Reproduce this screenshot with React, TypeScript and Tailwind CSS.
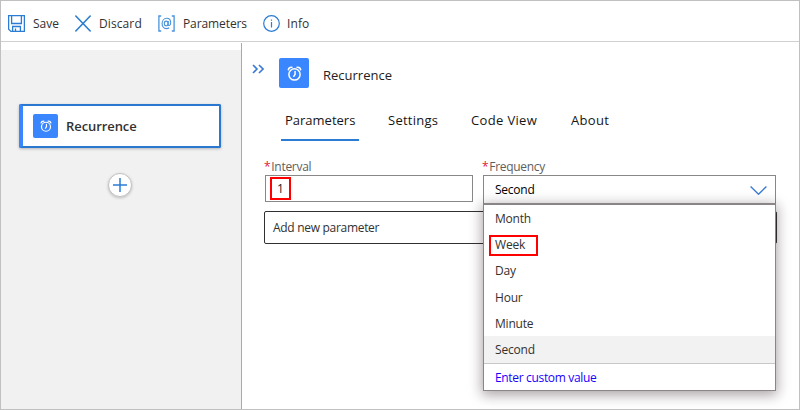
import React from "react";

function AlarmIcon({ size }: { size: number }) {
  return (
    <svg width={size} height={size} viewBox="0 0 16 16" fill="none" stroke="#fff" strokeWidth="1.6" strokeLinecap="round">
      <circle cx="8" cy="9" r="6" />
      <path d="M8.6 5.9V9L7.2 11M1.4 4C1.8 2.3 3 1.2 5.2 1.4M14.6 4C14.2 2.3 13 1.2 10.8 1.4" />
    </svg>
  );
}

function SaveIcon() {
  return (
    <svg width="17" height="17" viewBox="0 0 17 17" fill="none" stroke="#2b7cd3" strokeWidth="1.3">
      <path d="M.6 .6H16.4V16.4H3L.6 14.2ZM3.6 .6V8.5H13.4V.6M4.6 16.4V11.5H12.4V16.4M7.5 16V13.5" />
    </svg>
  );
}

function DiscardIcon() {
  return (
    <svg width="16" height="17" viewBox="0 0 16 17" fill="none" stroke="#2b7cd3" strokeWidth="1.4">
      <path d="M.4 .6 15.6 16.4M15.6 .6 .4 16.4" />
    </svg>
  );
}

function InfoIcon() {
  return (
    <svg width="17" height="17" viewBox="0 0 17 17" fill="none" stroke="#2b7cd3" strokeWidth="1.2">
      <circle cx="8.5" cy="8.5" r="7.8" />
      <path d="M8.5 7V12.5M8.5 4.5V5.8" strokeWidth="1.2" />
    </svg>
  );
}

function ParametersIcon() {
  return (
    <svg width="17" height="17" viewBox="0 0 17 17" fill="none" stroke="#4a93dc" strokeWidth="1.1">
      <path d="M3.2 1H.9V16H3.2M13.8 1H16.1V16H13.8" strokeWidth="1.3" />
      <ellipse cx="8.2" cy="8.4" rx="1.9" ry="2.3" />
      <path d="M10.3 6 10 9.5C9.9 11 12.7 11 12.7 7.8C12.7 5 11 3.2 8.7 3.2C6 3.2 4.1 5.5 4.1 8.6C4.1 11.7 5.8 13.6 8.2 13.6C9.6 13.6 10.5 13.3 11.2 12.8" />
    </svg>
  );
}

const options = ["Month", "Week", "Day", "Hour", "Minute", "Second"];

export default function App() {
  return (
    <div className="flex h-[410px] w-[800px] flex-col overflow-hidden border border-[#c0c0c0] bg-white font-['Open_Sans','Noto_Sans',sans-serif] text-[12px] leading-4 text-[#323130]">
      <header className="flex h-[41px] shrink-0 items-center border-b border-[#d0d0d0] pt-[4px] pl-[7px]">
        <div className="flex w-[67px] items-center gap-[8px]"><SaveIcon /><span className="pt-px">Save</span></div>
        <div className="flex w-[83px] items-center gap-[8px]"><DiscardIcon /><span className="pt-px tracking-[0.1px]">Discard</span></div>
        <div className="flex w-[105px] items-center gap-[8px]"><ParametersIcon /><span className="pt-px tracking-[-0.1px]">Parameters</span></div>
        <div className="flex items-center gap-[7px]"><InfoIcon /><span className="pt-px tracking-[0.1px]">Info</span></div>
      </header>

      <div className="flex min-h-0 flex-1 pt-px">
        <aside className="w-[241px] shrink-0 border-r border-[#a9a9a9] pt-[7px]">
          <div className="flex h-full flex-col items-start bg-[#f1f1f1] pt-[54px] pl-[18px]">
            <div className="flex h-[44px] w-[202px] items-center rounded-[2px] border-2 border-l-4 border-[#2b78d0] border-l-[#3a86ff] bg-white pl-[10px] shadow-[0_1px_3px_rgba(0,0,0,0.25)]">
              <div className="flex h-6 w-[25px] items-center justify-center rounded-[2px] bg-[#3a86ff]"><AlarmIcon size={12} /></div>
              <span className="ml-[8px] text-[13px] font-semibold tracking-[-0.08px]">Recurrence</span>
            </div>
            <div className="mt-[25px] ml-[89px] flex size-6 items-center justify-center rounded-full border border-[#c3c3c3] bg-white shadow-[0_1px_3px_rgba(0,0,0,0.22)]">
              <svg width="14" height="14" viewBox="0 0 14 14" stroke="#2b7cd3" strokeWidth="1.5"><path d="M7 0V14M0 7H14" /></svg>
            </div>
          </div>
        </aside>

        <main className="min-w-0 flex-1">
          <div className="flex h-[45px] items-end pl-[10px]">
            <svg className="mb-[14px]" width="12" height="10" viewBox="0 0 12 10" fill="none" stroke="#3b7bd5" strokeWidth="1.6"><path d="M1 1 5 5 1 9M7 1 11 5 7 9" /></svg>
            <div className="ml-[15px] flex size-[30px] items-center justify-center rounded-[2px] bg-[#3a86ff]"><AlarmIcon size={15} /></div>
            <span className="mb-[5px] ml-[14px] text-[13px] text-[#222]">Recurrence</span>
          </div>
          <nav className="flex h-[53px] items-end pl-[39px] text-[13px] text-[#161616]">
            <div className="h-[29px] w-[78px] border-b-2 border-[#2b7cd3] pl-[4px]">Parameters</div>
            <div className="ml-[29px] h-[29px] w-[83px] tracking-[0.25px]">Settings</div>
            <div className="h-[29px] w-[100px] tracking-[0.35px]">Code View</div>
            <div className="h-[29px] tracking-[0.3px]">About</div>
          </nav>

          <div className="flex pt-[18px] pl-[22px] text-[#605e5c]">
            <div className="w-[218px] tracking-[-0.3px]"><span className="mr-[1px] text-[#e02030]">*</span>Interval</div>
            <div className="tracking-[-0.3px]"><span className="mr-[1px] text-[#e02030]">*</span>Frequency</div>
          </div>
          <div className="flex pl-[23px]">
            <div className="flex h-[27px] w-[208px] items-center border border-[#8a8886] pl-[4px]">
              <div className="flex h-[23px] w-[21px] items-center justify-center border-2 border-[#ff0000] text-[#222]">1</div>
            </div>
            <div className="relative ml-[10px] h-[29px] w-[293px]">
              <div className="flex h-[29px] items-center justify-between border border-b-0 border-[#8a8886] pr-[8px] pl-[11px] text-black">
                <span className="tracking-[-0.25px]">Second</span>
                <svg width="17" height="9" viewBox="0 0 17 9" fill="none" stroke="#3b7bd5" strokeWidth="1.4"><path d="M.6 .6 8.5 8.2 16.4 .6" /></svg>
              </div>
              <div className="absolute top-[28px] left-0 z-10 h-[188px] w-[293px] border border-t-2 border-[#8a8688] bg-white tracking-[-0.2px] shadow-[0_3px_12px_1px_rgba(40,20,30,0.4)]">
                {options.map((name) => (
                  <div key={name} className={name === "Second" ? "flex h-[27px] items-center bg-[#f3f2f2] pt-px pl-[11px]" : "flex h-[26.2px] items-center pt-[2px] pl-[11px]"}>
                    {name === "Week" ? (
                      <span className="-ml-[6px] flex h-[21px] w-[49px] items-center border-2 border-[#ff0000] pb-px pl-[4px]">Week</span>
                    ) : name}
                  </div>
                ))}
                <div className="flex h-[28px] items-center border-t border-[#c8c8c8] pt-px pl-[11px] tracking-[-0.33px] text-[#1a00ff]">Enter custom value</div>
              </div>
            </div>
          </div>
          <div className="mt-[7px] ml-[22px] flex h-[33px] w-[513px] items-center rounded-[2px] border border-[#323130] pl-[8px] tracking-[-0.3px]">Add new parameter</div>
        </main>
      </div>
    </div>
  );
}
